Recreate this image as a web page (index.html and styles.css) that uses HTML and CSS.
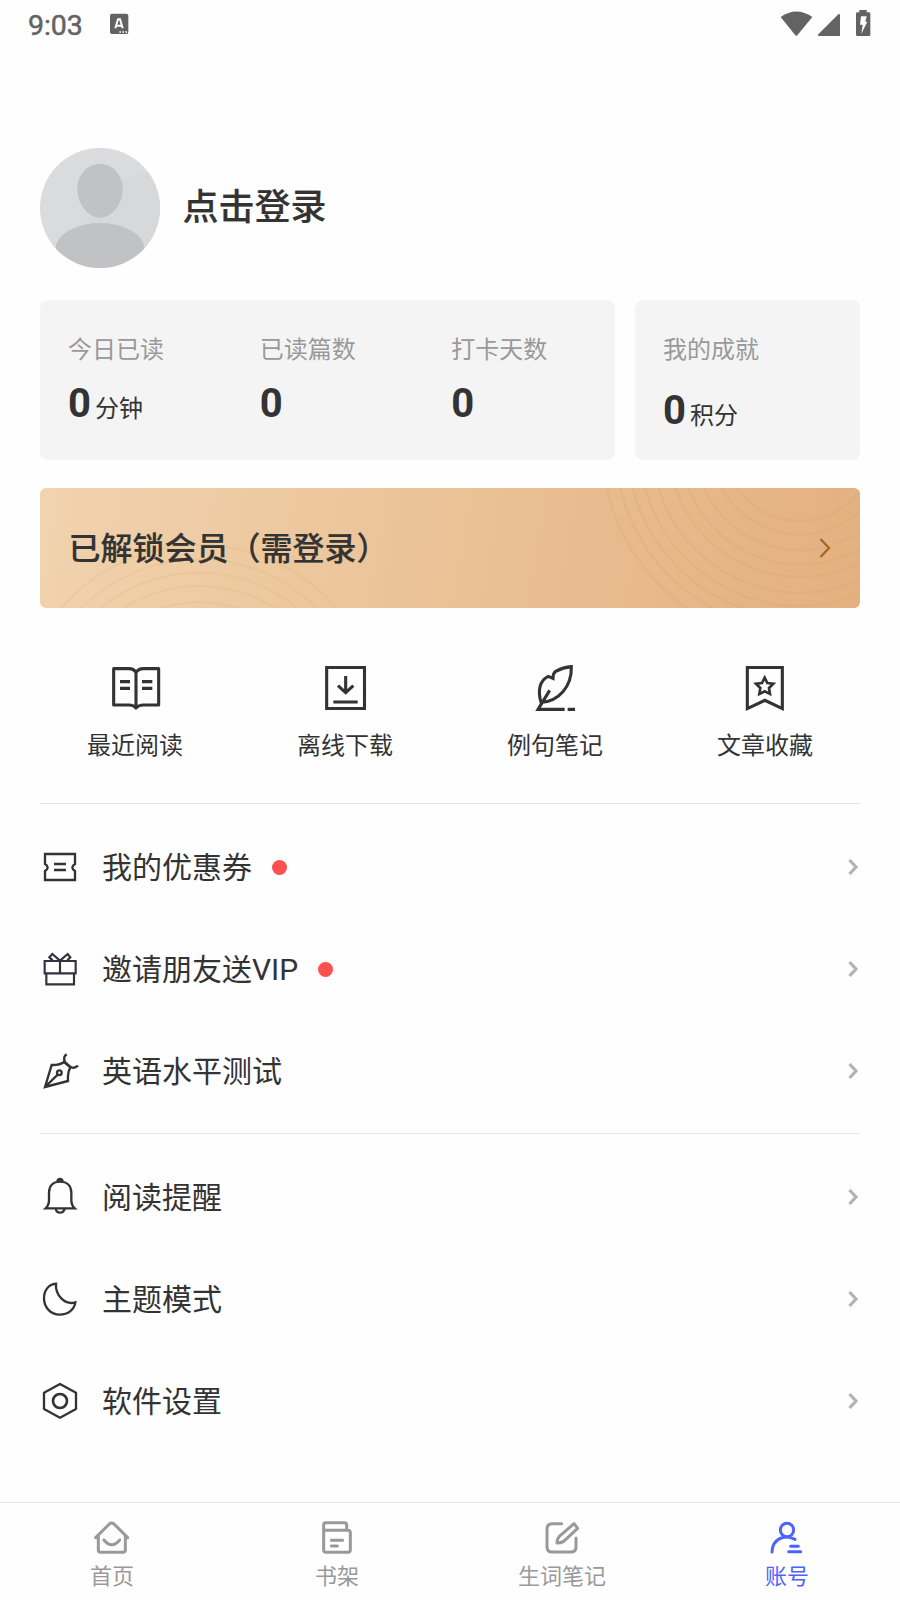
FILE: index.html
```html
<!DOCTYPE html>
<html lang="zh-CN">
<head>
<meta charset="utf-8">
<title>账号</title>
<link rel="stylesheet" href="styles.css">
</head>
<body>
<div class="app">
  <header class="status">
    <span class="clock">9:03</span>
    <svg class="status-app" viewBox="327 36 60 72"><rect x="330" y="41" width="55" height="61" rx="6" fill="#636363"/><path d="M346 85l8-27h6l8 27M350 77h14" fill="none" stroke="#fff" stroke-width="6"/><path d="M358 96h23" stroke="#fff" stroke-width="5" stroke-dasharray="5 4"/></svg>
    <svg class="status-icons" viewBox="120 27 276 84" fill="#636363"><path d="M122 51Q169 18 217 51L172 106Q169 109 166 106Z"/><path d="M300 44V108H236Q232 107 235 103L295 43Q299 40 300 44Z"/><path d="M358 30h22v7h7q4 0 4 4v63q0 4-4 4h-35q-4 0-4-4V41q0-4 4-4h6z"/><path d="M363 49h17l-4 16h6L364 101l4-27h-8z" fill="#fff"/></svg>
  </header>

  <section class="profile">
    <svg class="avatar" viewBox="0 0 360 360"><defs><clipPath id="round"><circle cx="180" cy="180" r="180"/></clipPath></defs><g clip-path="url(#round)"><path fill="#d9dbdc" d="M0 0h360v360H0z"/><path fill="#d6d8da" d="M360 65Q175 90 125 260L360 360z"/><path fill="#c1c2c4" d="M180 48C218 48 248 78 248 124C248 168 216 209 180 209S112 168 112 124C112 78 142 48 180 48Z"/><ellipse cx="180" cy="304" rx="134" ry="79" fill="#c1c2c4"/></g></svg>
    <h1 class="name">点击登录</h1>
  </section>

  <section class="stats">
    <div class="card reading">
      <div class="stat"><span class="label">今日已读</span><span class="value"><b>0</b><span class="unit">分钟</span></span></div>
      <div class="stat"><span class="label">已读篇数</span><span class="value"><b>0</b></span></div>
      <div class="stat"><span class="label">打卡天数</span><span class="value"><b>0</b></span></div>
    </div>
    <div class="card score">
      <div class="stat"><span class="label">我的成就</span><span class="value"><b>0</b><span class="unit">积分</span></span></div>
    </div>
  </section>

  <section class="banner">
    <svg class="rings" viewBox="0 0 2460 360"><g stroke-opacity=".17"><circle cx="477" cy="716" r="545"/><circle cx="477" cy="716" r="502"/><circle cx="477" cy="716" r="462"/><circle cx="477" cy="716" r="422"/><circle cx="477" cy="716" r="373"/></g><g stroke-opacity=".3"><circle cx="2280" cy="-128" r="227"/><circle cx="2280" cy="-128" r="267"/><circle cx="2280" cy="-128" r="315"/><circle cx="2280" cy="-128" r="358"/><circle cx="2280" cy="-128" r="395"/><circle cx="2280" cy="-128" r="443"/><circle cx="2280" cy="-128" r="482"/><circle cx="2280" cy="-128" r="518"/><circle cx="2280" cy="-128" r="554"/><circle cx="2280" cy="-128" r="594"/></g></svg>
    <span class="banner-title">已解锁会员（需登录）</span>
    <svg class="banner-arrow" viewBox="0 0 12 22"><path d="M1.500 2L10 11 1.500 20"/></svg>
  </section>

  <nav class="shortcuts">
    <a class="shortcut"><svg viewBox="135 54 180 180"><path d="M228 97Q221 86 207 86H161V195H207Q221 195 228 204Q236 195 250 195H296V86H250Q236 86 228 97V204" stroke-linejoin="round"/><path d="M180 125h30M180 145h30M246 125h31M246 145h31"/></svg><span>最近阅读</span></a>
    <a class="shortcut"><svg viewBox="765 54 180 180"><path d="M800 82.5H913.500V205.500H800zM857 108v49M834 137l23 21 23-21M820 186h73"/></svg><span>离线下载</span></a>
    <a class="shortcut"><svg viewBox="195 54 180 180"><path d="M243 187C233 153 238 121 265 109L279 115Q279 100 287 94Q309 82 334 80C336 140 295 185 243 187ZM269 151L234 208H314M323 208h22"/></svg><span>例句笔记</span></a>
    <a class="shortcut"><svg viewBox="825 54 180 180"><path d="M862 82.500H967V206L914.500 181 862 206z"/><path stroke-width="8" d="M914 113l8 16 18 2-13 13 3 18-16-8-16 8 3-18-13-13 18-2z"/></svg><span>文章收藏</span></a>
  </nav>

  <section class="menu">
    <a class="row"><svg class="icon" viewBox="60 81 120 120"><path d="M75 102H165V132Q149 142 165 153V180H75V153Q91 142 75 132ZM102 132h36M102 150h36"/></svg><span class="row-text">我的优惠券</span><i class="dot"></i><svg class="chevron" viewBox="0 0 10 18"><path d="M1.500 2L8 9 1.500 16"/></svg></a>
    <a class="row"><svg class="icon gift" viewBox="60 387 120 120"><path d="M74 423H167V460H74zM79 460V493H162V460M120 423V460M98 421L88 412 97 402 119 421M142 421L151 412 143 402 121 421"/></svg><span class="row-text">邀请朋友送VIP</span><i class="dot"></i><svg class="chevron" viewBox="0 0 10 18"><path d="M1.500 2L8 9 1.500 16"/></svg></a>
    <a class="row"><svg class="icon" viewBox="60 693 120 120"><path d="M75 801L95 735Q118 736 132 726L151 742Q142 759 144 783ZM75 801L114 763M140 703Q128 711 135 726L152 741Q163 747 174 737"/><circle cx="118" cy="758" r="7"/></svg><span class="row-text">英语水平测试</span><svg class="chevron" viewBox="0 0 10 18"><path d="M1.500 2L8 9 1.500 16"/></svg></a>
  </section>

  <section class="menu">
    <a class="row"><svg class="icon" viewBox="60 141 120 120"><path d="M77 235Q87 226 87 210V188C87 165 102 155 120 155S154 165 154 188V210Q154 226 164 235ZM112 155Q113 147 120 147T128 155M107 236Q109 248 120 248T134 236"/></svg><span class="row-text">阅读提醒</span><svg class="chevron" viewBox="0 0 10 18"><path d="M1.500 2L8 9 1.500 16"/></svg></a>
    <a class="row"><svg class="icon" viewBox="60 447 120 120"><path d="M108 461C85 463 72 482 72 505C72 532 92 554 119 554C145 554 163 538 166 517C136 526 105 497 108 461Z"/></svg><span class="row-text">主题模式</span><svg class="chevron" viewBox="0 0 10 18"><path d="M1.500 2L8 9 1.500 16"/></svg></a>
    <a class="row"><svg class="icon" viewBox="60 753 120 120"><path d="M120 762L168 788V837L120 863 72 837V788Z" stroke-linejoin="round"/><circle cx="120" cy="813" r="21" stroke-width="8"/></svg><span class="row-text">软件设置</span><svg class="chevron" viewBox="0 0 10 18"><path d="M1.500 2L8 9 1.500 16"/></svg></a>
  </section>

  <nav class="tabs">
    <a class="tab"><svg viewBox="276 114 120 120"><path d="M287 173L328 132Q335 126 342 132L383 173M295 168V210Q295 217 302 217H369Q376 217 376 210V168M312 180Q335 209 359 180"/></svg><span>首页</span></a>
    <a class="tab"><svg viewBox="951 114 120 120"><path d="M971 151V134Q971 128 977 128H1033Q1040 128 1040 135V151M971 151H1044Q1051 151 1051 158V210Q1051 217 1044 217H978Q971 217 971 210V151M994 181h34M994 198h18"/></svg><span>书架</span></a>
    <a class="tab"><svg viewBox="276 114 120 120"><path d="M335 131H307Q291 131 291 147V200Q291 216 307 216H362Q378 216 378 200V174"/><path d="M372 131L383 145 341 184Q332 189 321 189Q321 177 328 169Z"/></svg><span>生词笔记</span></a>
    <a class="tab active"><svg viewBox="951 114 120 120"><circle cx="1011" cy="150" r="20"/><path d="M966 216C966 181 1000 159 1035 178M1022 199h23M1016 215h36"/></svg><span>账号</span></a>
  </nav>
</div>
</body>
</html>
```
FILE: styles.css
```css
* { box-sizing: border-box; }
body { margin: 0; background: #fefefe; color: #333; font-family: Roboto, "Noto Sans CJK SC", sans-serif; }
svg { display: block; flex: none; overflow: visible; }
.app { width: 900px; height: 1600px; display: flex; flex-direction: column; overflow: hidden; }

.status { height: 48px; display: flex; align-items: center; padding: 0 30px 0 28px; color: #636363; }
.clock { font-size: 28.500px; font-weight: 400; line-height: 44px; padding-top: 4px; width: 81px; letter-spacing: -0.1px; -webkit-text-stroke: .5px #636363; }
.status-app { width: 20px; height: 24px; }
.status-icons { width: 92px; height: 28px; margin: -2px -2px 0 auto; }

.profile { height: 120px; margin: 100px 40px 0; display: flex; align-items: center; gap: 22.500px; }
.avatar { width: 120px; height: 120px; }
.name { margin: 0; font-size: 36px; font-weight: 500; line-height: 52px; padding-bottom: 1px; -webkit-text-stroke: .2px #333; }

.stats { margin: 32px 40px 0; display: flex; gap: 20px; height: 160px; }
.card { background: #f4f4f4; border-radius: 8px; display: flex; padding-top: 32px; }
.reading { width: 575px; }
.score { flex: 1; }
.stat { flex: 1; padding-left: 28px; display: flex; flex-direction: column; }
.label { font-size: 24px; line-height: 36px; color: #999; }
.value { display: flex; align-items: baseline; gap: 4px; line-height: 48px; margin-top: 12px; }
.score .value { margin-top: 19px; }
.value b { font-size: 40px; font-weight: 700; }
.unit { font-size: 24px; }

.banner { position: relative; margin: 28px 40px 0; height: 120px; border-radius: 6px; overflow: hidden; display: flex; align-items: center; justify-content: space-between; padding: 0 29px 0 28.500px; background: linear-gradient(100deg, #f1d3af 0%, #ebc398 45%, #e4b080 100%); }
.rings { position: absolute; left: 0; top: 0; width: 820px; height: 120px; fill: none; stroke: #d5ac60; stroke-width: 6; }
.banner-title { position: relative; font-size: 32px; font-weight: 500; line-height: 46px; padding-top: 2px; -webkit-text-stroke: .2px #333; }
.banner-arrow { position: relative; width: 12px; height: 22px; fill: none; stroke: #a86628; stroke-width: 2.400; }

.shortcuts { margin: 50px 30px 0; height: 145px; display: flex; }
.shortcut { flex: 1; display: flex; flex-direction: column; align-items: center; font-size: 24px; line-height: 36px; }
.shortcut svg { width: 60px; height: 60px; fill: none; stroke: #333; stroke-width: 9.300; margin-bottom: 10px; }

.menu { margin: 0 40px; border-top: 1px solid #e5e5e5; padding: 12px 0 11px; }
.row { height: 102px; display: flex; align-items: center; }
.icon { width: 40px; height: 40px; fill: none; stroke: #333; stroke-width: 7; margin-right: 22px; }
.gift { stroke: #34323f; stroke-width: 6.500; }
.row-text { font-size: 30px; line-height: 44px; padding-top: 2px; }
.dot { width: 15px; height: 15px; border-radius: 50%; background: #ff5050; margin: 0 0 0 20px; }
.chevron { width: 10px; height: 18px; margin: 0 2px 0 auto; fill: none; stroke: #b2b2b2; stroke-width: 3.200; }

.tabs { margin-top: auto; height: 98px; border-top: 1px solid #e5e5e5; display: flex; }
.tab { flex: 1; display: flex; flex-direction: column; align-items: center; padding: 15px 1px 0 0; font-size: 22px; line-height: 32px; color: #999; }
.tab svg { width: 40px; height: 40px; fill: none; stroke: currentColor; stroke-width: 9; stroke-linecap: round; stroke-linejoin: round; margin-bottom: 3px; }
.tab.active { color: #4c63ff; }
```
